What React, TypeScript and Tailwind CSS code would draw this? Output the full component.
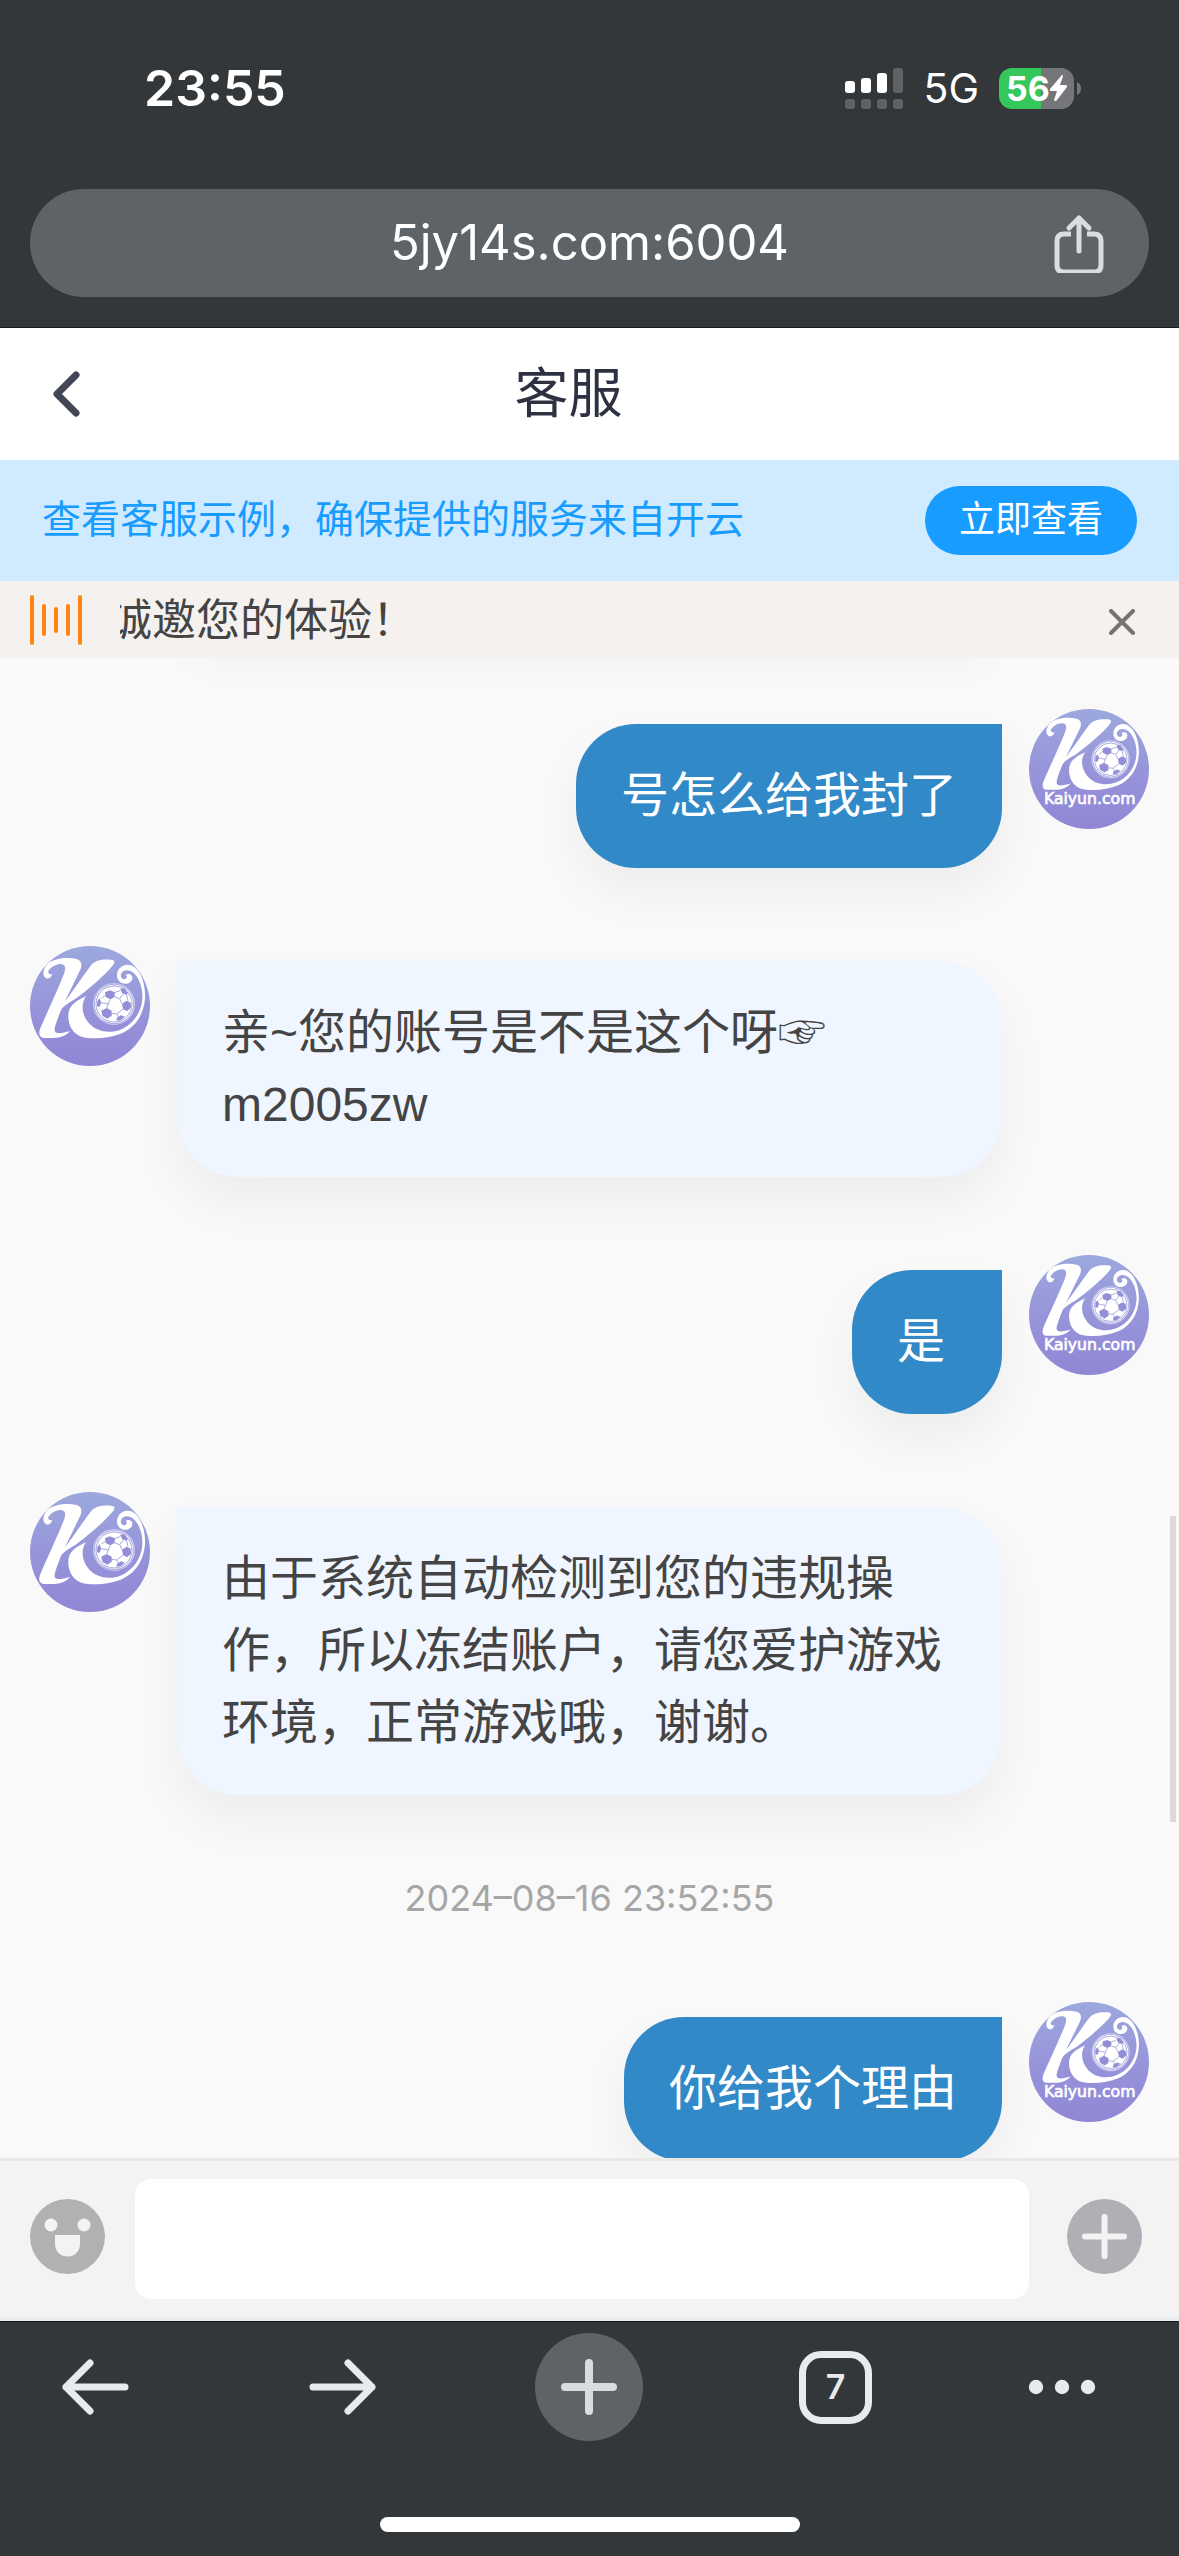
import React, { useState } from "react";

interface Message {
  id: number;
  side: "left" | "right";
  text: string;
  time?: string;
}

const messages: Message[] = [
  { id: 1, side: "right", text: "号怎么给我封了" },
  { id: 2, side: "left", text: "亲~您的账号是不是这个呀☞ m2005zw" },
  { id: 3, side: "right", text: "是" },
  {
    id: 4,
    side: "left",
    text: "由于系统自动检测到您的违规操作，所以冻结账户，请您爱护游戏环境，正常游戏哦，谢谢。",
  },
  { id: 5, side: "right", text: "你给我个理由", time: "2024–08–16 23:52:55" },
];

const KLogo = () => (
  <>
    <g fill="#fff">
      <path d="M127 131C124 143 114 150 106 143C96 134 99 116 113 101C132 85 172 80 200 87C216 91 217 106 210 121L165 214C186 187 222 133 242 107C255 90 278 87 303 89C316 90 316 97 307 108C285 135 232 180 200 204C185 214 163 225 154 238C146 258 137 281 134 296C131 312 150 312 180 303C171 315 153 324 130 324L100 324C88 323 85 310 90 297C102 268 143 180 162 131C169 112 165 103 153 102C137 101 119 113 114 126C118 133 122 134 127 131Z" />
      <path d="M228 199C206 209 182 222 176 246C171 278 184 308 214 320C246 329 300 325 337 309C381 289 402 248 405 205C407 159 391 118 364 106C342 99 322 114 321 134C320 151 332 163 349 161C363 159 370 148 366 138C362 130 352 130 347 136C352 138 352 143 346 147C336 150 331 141 333 133C337 119 357 116 371 129C390 146 399 179 397 208C394 247 369 284 331 299C299 311 260 306 237 280C216 256 211 223 228 199Z" />
      <circle cx="312" cy="222" r="58" />
    </g>
    <circle cx="312" cy="222" r="61" fill="none" stroke="#c9c9ee" strokeWidth="4" />
    <circle cx="312" cy="222" r="54" fill="none" stroke="#a3a0db" strokeWidth="3" />
    <g fill="#938fd6">
      <path d="M285 187L299 181L315 187L314 201L301 208L287 201Z" />
      <path d="M336 221L350 212L362 218L363 233L351 244L339 237Z" />
      <path d="M290 234L305 242L305 257L292 266L277 257L274 242Z" />
      <path d="M330 177L343 174L354 188L350 195L337 190Z" />
      <path d="M262 213L269 205L274 218L268 231L261 228Z" />
      <path d="M320 264L333 256L345 260L331 271L320 272Z" />
    </g>
    <g fill="none" stroke="#aaa7de" strokeWidth="3">
      <path d="M301 208L295 222L290 234M314 201L329 206L336 221M305 250L320 252L339 237M287 195L274 205M315 187L330 182M350 195L354 212M329 206L341 190M295 222L274 218M320 252L326 262" />
    </g>
  </>
);

const Avatar: React.FC<{ side: "left" | "right" }> = ({ side }) => (
  <div className="size-[120px] shrink-0 overflow-hidden rounded-full bg-linear-to-b from-[#9ca8de] via-[#9795da] to-[#9086d5]">
    {side === "left" ? (
      <svg viewBox="60 48 360 360" className="size-full" aria-hidden="true">
        <KLogo />
      </svg>
    ) : (
      <svg viewBox="57 57 360 360" className="size-full" aria-hidden="true">
        <g transform="translate(18 8) scale(.91 .9)">
          <KLogo />
        </g>
        <text x="239" y="342" textAnchor="middle" fill="#fff" stroke="#fff" strokeWidth="2" fontSize="47" fontFamily="DejaVu Sans, sans-serif">
          Kaiyun.com
        </text>
      </svg>
    )}
  </div>
);

const MessageRow: React.FC<{ message: Message }> = ({ message }) =>
  message.side === "left" ? (
    <div className="flex items-start gap-[27px]">
      <Avatar side="left" />
      <p className="mt-[15px] mr-[148px] rounded-[60px] rounded-tl-none bg-[#eff6ff] px-[45px] py-9 text-[#444] shadow-[0_24px_48px_rgba(0,0,0,0.05)]">
        {message.text}
      </p>
    </div>
  ) : (
    <div className="flex items-start justify-end gap-[27px]">
      <p className="mt-[15px] ml-[148px] min-w-[150px] rounded-[60px] rounded-tr-none bg-[#3189c8] px-[45px] py-9 text-white shadow-[0_24px_48px_rgba(0,0,0,0.05)]">
        {message.text}
      </p>
      <Avatar side="right" />
    </div>
  );

const StatusBar = () => (
  <div className="flex items-center justify-between pt-[54px] pr-[98px] pl-36 text-white">
    <span className="text-[50px] leading-[68px] font-semibold">23:55</span>
    <div className="flex items-center">
      <svg width="58" height="41" viewBox="0 0 58 41" fill="#fff" aria-hidden="true">
        <rect x="0" y="13" width="10" height="12" rx="3" />
        <rect x="16" y="10" width="10" height="15" rx="3" />
        <rect x="32" y="5" width="10" height="20" rx="3" />
        <g fill="#5f6163">
          <rect x="48" y="0" width="10" height="25" rx="3" />
          <rect x="0" y="31" width="10" height="10" rx="3" />
          <rect x="16" y="31" width="10" height="10" rx="3" />
          <rect x="32" y="31" width="10" height="10" rx="3" />
          <rect x="48" y="31" width="10" height="10" rx="3" />
        </g>
      </svg>
      <span className="ml-5 text-[41px] leading-[48px]">5G</span>
      <div className="ml-5 flex h-[41px] w-[75px] items-center justify-center rounded-[13px] bg-linear-to-r from-[#34c759] from-56% to-[#757679] to-56%">
        <span className="text-[34px] leading-[41px] font-bold">56</span>
        <svg width="17" height="26" viewBox="0 0 17 26" fill="#fff" aria-hidden="true">
          <path d="M12 0L0 14Q-1 16 1 16H7L4 25Q5 27 7 25L17 12Q18 10 15 10H10L13 1Q13 0 12 0Z" />
        </svg>
      </div>
      <svg width="4" height="13" viewBox="0 0 4 13" className="ml-[3px]" aria-hidden="true">
        <path d="M0 0Q4 2 4 6.5Q4 11 0 13Z" fill="#757679" />
      </svg>
    </div>
  </div>
);

const App: React.FC = () => {
  const [draft, setDraft] = useState("");
  const [showNotice, setShowNotice] = useState(true);

  return (
    <div className="flex h-screen flex-col bg-[#33373a] font-['Inter','Noto_Sans_CJK_SC',sans-serif]">
      <header className="shrink-0 border-b border-[#17191b] pb-[30px]">
        <StatusBar />
        <div className="mx-[30px] mt-[67px] grid h-[108px] grid-cols-[1fr_auto_1fr] items-center rounded-full bg-[#5e6367] pr-[45px]">
          <a href="#address" className="col-start-2 ml-[45px] text-[49px] leading-[60px] text-white">
            5jy14s.com:6004
          </a>
          <button type="button" aria-label="分享" className="justify-self-end">
            <svg width="50" height="60" viewBox="0 0 50 60" fill="none" stroke="#dadce0" strokeWidth="5" strokeLinejoin="round" aria-hidden="true">
              <path d="M17 21H10Q3 21 3 28V52Q3 59 10 59H40Q47 59 47 52V28Q47 21 40 21H33" />
              <path d="M25 38V5M15 15L25 5L35 15" strokeLinecap="round" />
            </svg>
          </button>
        </div>
      </header>

      <div className="flex h-[132px] shrink-0 items-center bg-white pr-[42px]">
        <button type="button" aria-label="返回" className="w-24 pl-[52px]">
          <svg width="28" height="46" viewBox="0 0 28 46" fill="none" stroke="#434656" strokeWidth="7" strokeLinecap="round" strokeLinejoin="round" aria-hidden="true">
            <path d="M24 4L5 23L24 42" />
          </svg>
        </button>
        <h1 className="flex-1 pr-24 text-center text-[54px] leading-[72px] text-[#2e3142]">客服</h1>
      </div>

      <div className="flex h-[121px] shrink-0 items-center justify-between bg-[#d0ebff] px-[42px]">
        <p className="pb-1 text-[39px] leading-[54px] text-[#189cff]">查看客服示例，确保提供的服务来自开云</p>
        <button type="button" className="h-[69px] w-[212px] rounded-full bg-[#189cff] pb-1 text-[36px] leading-[54px] text-white">
          立即查看
        </button>
      </div>

      {showNotice && (
        <div className="flex h-[77px] shrink-0 items-center bg-[#f5f1ee] pr-11 pl-[30px]">
          <svg width="52" height="50" viewBox="0 0 52 50" stroke="#ff8412" strokeWidth="4" strokeLinecap="round" aria-hidden="true">
            <path d="M2 2V48M14 11V39M26 14V36M38 11V39M50 2V48" />
          </svg>
          {/* scrolling notice, the text slides out under the left edge */}
          <div className="ml-[38px] flex-1 overflow-hidden">
            <p className="-ml-3 text-[44px] leading-[60px] whitespace-nowrap text-[#444]">诚邀您的体验！</p>
          </div>
          <button type="button" aria-label="关闭" onClick={() => setShowNotice(false)} className="pt-1">
            <svg width="26" height="26" viewBox="0 0 26 26" stroke="#757473" strokeWidth="4" strokeLinecap="round" aria-hidden="true">
              <path d="M2 2L24 24M24 2L2 24" />
            </svg>
          </button>
        </div>
      )}

      <main className="relative min-h-0 flex-1 overflow-hidden bg-[#f9f9f9] px-[30px] font-['Liberation_Sans','Noto_Sans_CJK_SC',sans-serif] text-[48px] leading-[72px]">
        {/* shadow of the message that is scrolled out above */}
        <div className="mx-[148px] -mt-[171px] mb-[78px] h-36 rounded-[60px] bg-[#eff6ff] shadow-[0_24px_48px_rgba(0,0,0,0.05)]"></div>
        <div className="flex flex-col gap-[78px]">
          {messages.map((message) => (
            <React.Fragment key={message.id}>
              {message.time && (
                <time className="text-center font-['Inter',sans-serif] text-[36px] leading-[51px] text-[#a6a6a6]">
                  {message.time}
                </time>
              )}
              <MessageRow message={message} />
            </React.Fragment>
          ))}
        </div>
        <div className="absolute top-[858px] right-[3px] h-[306px] w-[6px] bg-[#d9d9d9]"></div>
      </main>

      <form
        onSubmit={(e) => e.preventDefault()}
        className="flex shrink-0 items-center border-t-[3px] border-b-4 border-t-[#e8e8e8] border-b-[#e9ecee] bg-[#f3f3f3] py-[18px] pr-[37px] pl-[30px]"
      >
        <button type="button" aria-label="表情" className="pb-[6px]">
          <svg width="75" height="75" viewBox="0 0 75 75" aria-hidden="true">
            <circle cx="37.5" cy="37.5" r="37.5" fill="#b1b1b2" />
            <g fill="#f3f3f3">
              <circle cx="21" cy="26" r="6.5" />
              <circle cx="54" cy="26" r="6.5" />
              <path d="M25 36H50V45C50 53 44 57.5 37.5 57.5C31 57.5 25 53 25 45Z" />
            </g>
          </svg>
        </button>
        <input
          type="text"
          aria-label="消息"
          value={draft}
          onChange={(e) => setDraft(e.target.value)}
          className="mr-[38px] ml-[30px] h-[120px] min-w-0 flex-1 rounded-2xl bg-white px-6 text-[44px] text-[#444] outline-none"
        />
        <button type="button" aria-label="更多" className="pb-[6px]">
          <svg width="75" height="75" viewBox="0 0 75 75" aria-hidden="true">
            <circle cx="37.5" cy="37.5" r="37.5" fill="#b0afb6" />
            <path d="M37.5 18V57M18 37.5H57" stroke="#f3f3f3" strokeWidth="6" strokeLinecap="round" />
          </svg>
        </button>
      </form>

      <footer className="shrink-0 border-t border-[#17191b] pt-[11px] pb-6">
        <nav className="flex items-center justify-between pr-[83px] pl-[42px] text-[#e8eaed]">
          <button type="button" aria-label="后退" className="flex h-[108px] w-[108px] items-center justify-center">
            <svg width="68" height="56" viewBox="0 0 68 56" fill="none" stroke="currentColor" strokeWidth="7" strokeLinecap="round" strokeLinejoin="round" aria-hidden="true">
              <path d="M63 28H4M28 4L4 28L28 52" />
            </svg>
          </button>
          <button type="button" aria-label="前进" className="flex h-[108px] w-[108px] items-center justify-center">
            <svg width="68" height="56" viewBox="0 0 68 56" fill="none" stroke="currentColor" strokeWidth="7" strokeLinecap="round" strokeLinejoin="round" aria-hidden="true">
              <path d="M4 28H63M39 4L63 28L39 52" />
            </svg>
          </button>
          <button type="button" aria-label="新标签页" className="flex h-[108px] w-[108px] items-center justify-center rounded-full bg-[#5e6367]">
            <svg width="56" height="56" viewBox="0 0 56 56" stroke="#dadce0" strokeWidth="8" strokeLinecap="round" aria-hidden="true">
              <path d="M28 4V52M4 28H52" />
            </svg>
          </button>
          <button type="button" aria-label="标签页" className="flex h-[108px] w-[108px] items-center justify-center">
            <span className="flex size-[73px] items-center justify-center rounded-[22px] border-[7px] border-[#e8eaed] text-[34px] leading-none font-semibold">
              7
            </span>
          </button>
          <button type="button" aria-label="菜单" className="flex h-[108px] w-[68px] items-center justify-center">
            <svg width="68" height="16" viewBox="0 0 68 16" fill="currentColor" aria-hidden="true">
              <circle cx="8" cy="8" r="7.2" />
              <circle cx="34" cy="8" r="7.2" />
              <circle cx="60" cy="8" r="7.2" />
            </svg>
          </button>
        </nav>
        <div className="mx-auto mt-[76px] h-[15px] w-[420px] rounded-full bg-white"></div>
      </footer>
    </div>
  );
};

export default App;
